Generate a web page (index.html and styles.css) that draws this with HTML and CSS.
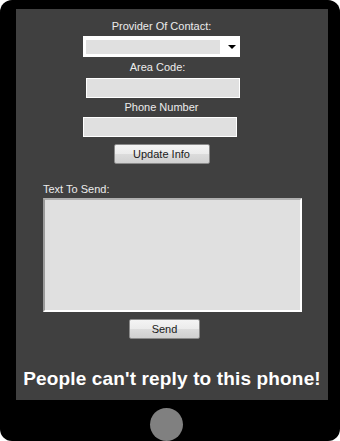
FILE: index.html
```html
<!DOCTYPE html>
<html lang="en">
<head>
    <meta charset="UTF-8">
    <meta name="viewport" content="width=device-width, initial-scale=1.0">
    <title>Text Sender</title>
    <link rel="stylesheet" href="styles.css">
</head>
<body>

    <div class="phone">
        <div class="screen">
            <div class="contact">
                <div class="label">Provider Of Contact:</div>
                <div class="combo">
                    <div class="combo-value"></div>
                    <div class="combo-arrow"></div>
                </div>
                <div class="label label-area">Area Code:</div>
                <div class="field field-area"></div>
                <div class="label label-number">Phone Number</div>
                <div class="field field-number"></div>
                <button class="win-button update-button">Update Info</button>
            </div>

            <div class="message">
                <div class="label">Text To Send:</div>
                <div class="textbox"></div>
                <button class="win-button send-button">Send</button>
            </div>

            <p class="notice">People can't reply to this phone!</p>
        </div>
        <div class="home-bar">
            <div class="home-button"></div>
        </div>
    </div>

</body>
</html>
```

FILE: styles.css
```css
body {
    margin: 0;
    padding: 0;
    background-color: #fff;
    font-family: "Liberation Sans", Arial, sans-serif;
}
.phone {
    width: 340px;
    height: 441px;
    background-color: #000;
    border-radius: 12px;
    padding-top: 9px;
    box-sizing: border-box;
}
.screen {
    width: 312px;
    height: 391px;
    margin-left: 16px;
    background-color: #404040;
    display: flex;
    flex-direction: column;
    overflow: hidden;
}
.label {
    color: #ececec;
    font-size: 11px;
    line-height: 13px;
}
.contact {
    width: 157px;
    margin-left: 67px;
    padding-top: 11px;
    display: flex;
    flex-direction: column;
    align-items: center;
}
.combo {
    width: 157px;
    height: 21px;
    margin-top: 3px;
    background-color: #fff;
    box-sizing: border-box;
    padding: 3px;
    display: flex;
    align-items: center;
}
.combo-value {
    width: 134px;
    height: 14px;
    background-color: #e0e0e0;
}
.combo-arrow {
    margin-left: 8px;
    width: 0;
    height: 0;
    border-left: 4px solid transparent;
    border-right: 4px solid transparent;
    border-top: 4px solid #000;
}
.label-area {
    margin-top: 4px;
    margin-left: -8px;
}
.label-number {
    margin-top: 3px;
}
.field {
    width: 154px;
    height: 20px;
    background-color: #e0e0e0;
    border: 1px solid #fff;
    box-sizing: border-box;
}
.field-area {
    margin-top: 4px;
    align-self: flex-end;
}
.field-number {
    margin-top: 3px;
    align-self: flex-start;
}
.win-button {
    font-family: "Liberation Sans", Arial, sans-serif;
    font-size: 11px;
    color: #1a1a1a;
    height: 20px;
    padding: 0;
    border: 1px solid #8a8a8a;
    border-radius: 2px;
    background: linear-gradient(#f4f4f4, #ebebeb 50%, #dcdcdc 51%, #d0d0d0);
    box-sizing: border-box;
}
.update-button {
    width: 96px;
    margin-top: 7px;
}
.message {
    margin-left: 27px;
    margin-top: 19px;
    display: flex;
    flex-direction: column;
}
.textbox {
    width: 259px;
    height: 114px;
    margin-top: 2px;
    background-color: #e0e0e0;
    border: 2px solid #fff;
    border-left-color: #9a9a9a;
    border-top-color: #b0b0b0;
    box-sizing: border-box;
}
.send-button {
    width: 71px;
    margin-top: 7px;
    margin-left: 86px;
}
.notice {
    margin: 29px 0 0;
    text-align: center;
    color: #fff;
    font-size: 19px;
    font-weight: bold;
    line-height: 22px;
    letter-spacing: 0.15px;
}
.home-bar {
    display: flex;
    justify-content: center;
    padding-top: 8px;
}
.home-button {
    width: 33px;
    height: 33px;
    border-radius: 50%;
    background-color: #808080;
    margin-left: -8px;
}
```
